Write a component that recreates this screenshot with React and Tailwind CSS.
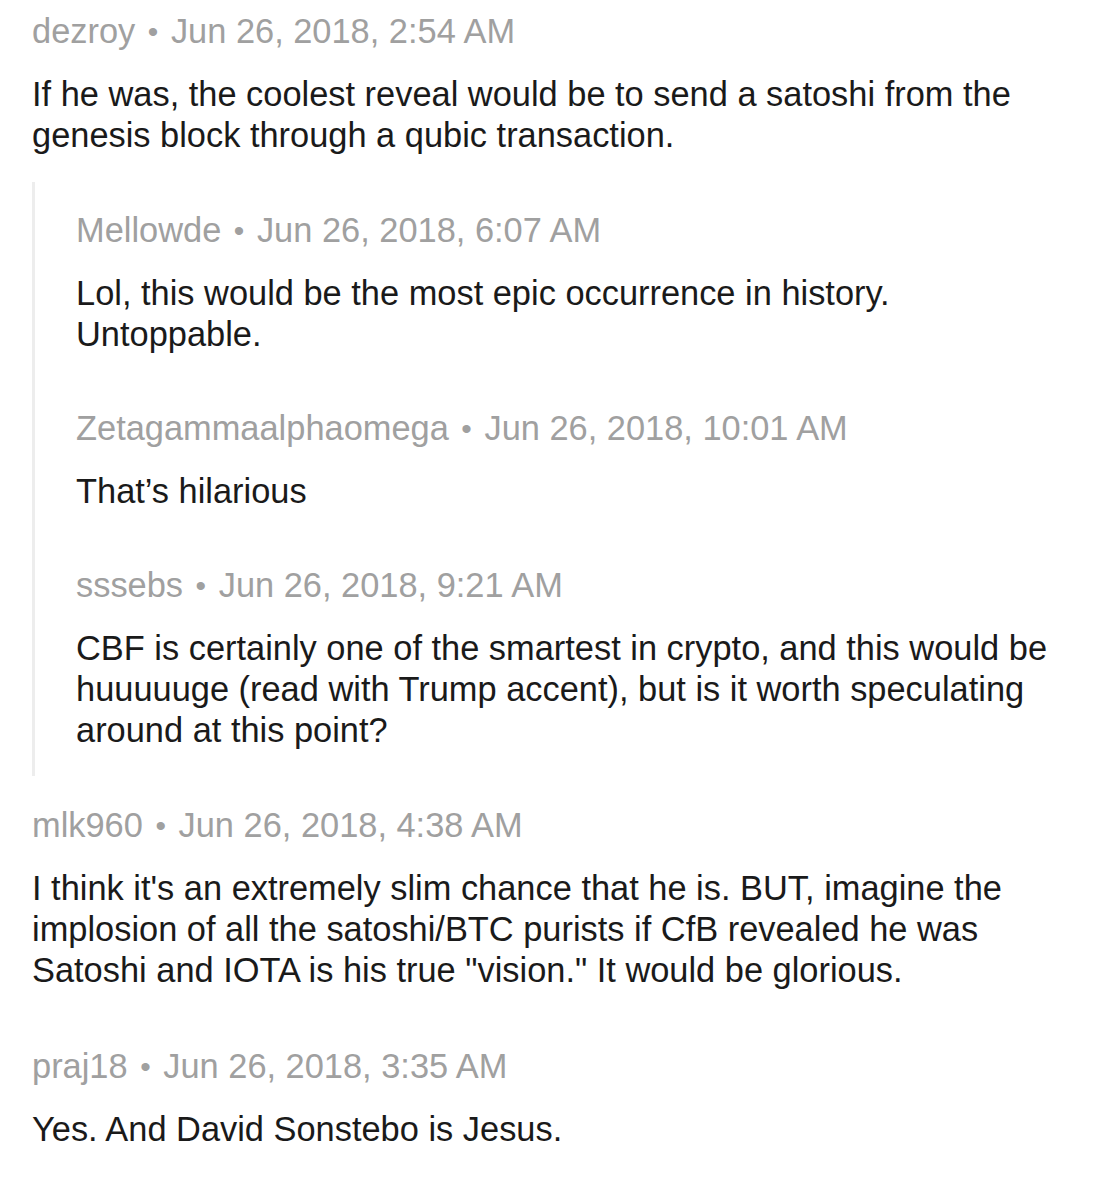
const thread = [
  {
    user: "dezroy",
    time: "Jun 26, 2018, 2:54 AM",
    text: "If he was, the coolest reveal would be to send a satoshi from the genesis block through a qubic transaction.",
    replies: [
      {
        user: "Mellowde",
        time: "Jun 26, 2018, 6:07 AM",
        text: "Lol, this would be the most epic occurrence in history. Untoppable.",
      },
      {
        user: "Zetagammaalphaomega",
        time: "Jun 26, 2018, 10:01 AM",
        text: "That’s hilarious",
      },
      {
        user: "sssebs",
        time: "Jun 26, 2018, 9:21 AM",
        text: "CBF is certainly one of the smartest in crypto, and this would be huuuuuge (read with Trump accent), but is it worth speculating around at this point?",
      },
    ],
  },
  {
    user: "mlk960",
    time: "Jun 26, 2018, 4:38 AM",
    text: 'I think it\'s an extremely slim chance that he is. BUT, imagine the implosion of all the satoshi/BTC purists if CfB revealed he was Satoshi and IOTA is his true "vision." It would be glorious.',
  },
  {
    user: "praj18",
    time: "Jun 26, 2018, 3:35 AM",
    text: "Yes. And David Sonstebo is Jesus.",
  },
];

function Comment({ user, time, text }) {
  return (
    <div>
      <p className="h-[41px] text-[#a0a0a0]">
        {user} <span className="relative -top-[1px] px-[3px] text-[30px] leading-none">•</span> {time}
      </p>
      <p className="mt-[22px] text-[#1a1a1a]">{text}</p>
    </div>
  );
}

export default function App() {
  return (
    <div className="min-h-[1200px] bg-white px-8 pt-[11px] font-['Liberation_Sans',Arial,sans-serif] text-[34.4px] leading-[41px]">
      {thread.map((c, i) => (
        <div key={c.user} className={i === 0 ? "" : i === 1 ? "mt-[29px]" : "mt-[55px]"}>
          <Comment {...c} />
          {c.replies && (
            <div className="mt-[26px] flex flex-col gap-[53px] border-l-[3px] border-[#ededed] pb-[25px] pl-[41px] pt-[28px]">
              {c.replies.map((r) => (
                <Comment key={r.user} {...r} />
              ))}
            </div>
          )}
        </div>
      ))}
    </div>
  );
}
